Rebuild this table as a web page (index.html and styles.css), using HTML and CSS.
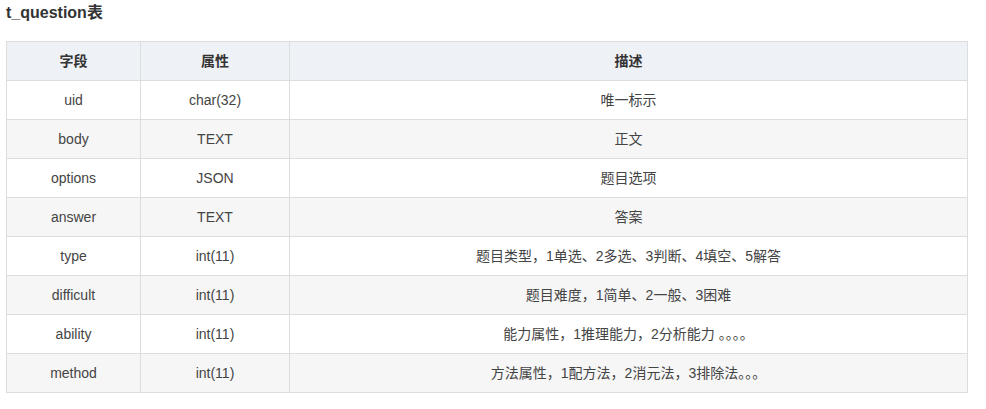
FILE: index.html
```html
<!DOCTYPE html>
<html>
<head>
<meta charset="utf-8">
<link rel="stylesheet" href="styles.css">
</head>
<body>
<h3 class="title">t_question表</h3>
<table class="tbl">
<colgroup><col class="c1"><col class="c2"><col class="c3"></colgroup>
<thead>
<tr><th>字段</th><th>属性</th><th>描述</th></tr>
</thead>
<tbody>
<tr><td>uid</td><td>char(32)</td><td>唯一标示</td></tr>
<tr><td>body</td><td>TEXT</td><td>正文</td></tr>
<tr><td>options</td><td>JSON</td><td>题目选项</td></tr>
<tr><td>answer</td><td>TEXT</td><td>答案</td></tr>
<tr><td>type</td><td>int(11)</td><td>题目类型，1单选、2多选、3判断、4填空、5解答</td></tr>
<tr><td>difficult</td><td>int(11)</td><td>题目难度，1简单、2一般、3困难</td></tr>
<tr><td>ability</td><td>int(11)</td><td>能力属性，1推理能力，2分析能力 。。。。</td></tr>
<tr><td>method</td><td>int(11)</td><td>方法属性，1配方法，2消元法，3排除法。。。</td></tr>
</tbody>
</table>
</body>
</html>
```
FILE: styles.css
```css
html, body {
  margin: 0;
  padding: 0;
  background: #fff;
}
body {
  padding: 0 6px;
  font-family: "Liberation Sans", Arial, "Noto Sans CJK SC", sans-serif;
  color: #333;
}
.title {
  margin: 0;
  padding-top: 3px;
  height: 41px;
  box-sizing: border-box;
  font-size: 16px;
  line-height: 20px;
  font-weight: bold;
  color: #333;
}
.tbl {
  border-collapse: collapse;
  width: 962px;
  table-layout: fixed;
  font-size: 14px;
}
.c1 { width: 134px; }
.c2 { width: 149px; }
.tbl th, .tbl td {
  border: 1px solid #ddd;
  height: 39px;
  padding: 0 8px;
  text-align: center;
  vertical-align: middle;
  box-sizing: border-box;
  line-height: 18px;
}
.tbl th {
  background: #eef1f5;
  font-weight: bold;
  color: #333;
}
.tbl td {
  color: #444;
}
.tbl tbody tr:nth-child(even) td {
  background: #f6f6f6;
}
```
